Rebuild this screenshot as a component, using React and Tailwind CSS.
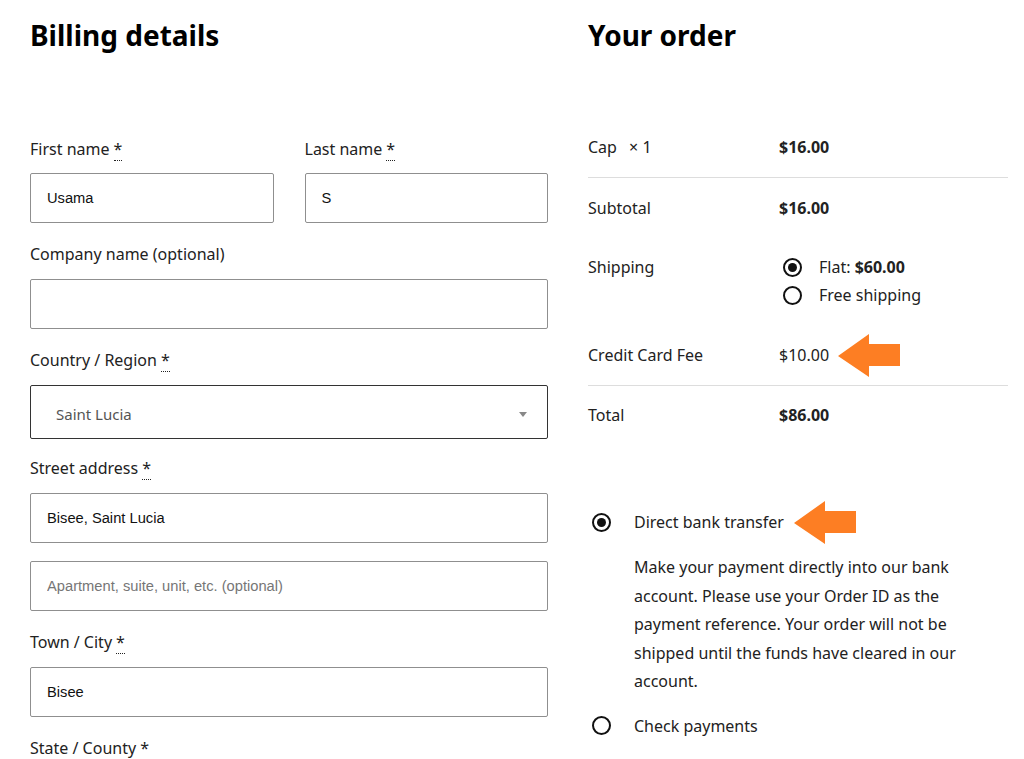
import React from 'react';

const font = { fontFamily: '"Noto Sans", "Open Sans", sans-serif' };
const inputFont = { fontFamily: '"Liberation Sans", Arial, sans-serif' };

const Req = () => (
  <abbr className="no-underline border-b border-dotted border-[#222] ml-1" title="required">*</abbr>
);

const Field = ({ label, value, placeholder, optional, gap = 'mb-[13px]' }) => (
  <div className="mb-[19px]">
    {label && (
      <label className={`block text-[16px] leading-6 text-[#222] ${gap}`}>
        {label}
        {!optional && <Req />}
      </label>
    )}
    <input
      readOnly
      value={value || ''}
      placeholder={placeholder}
      className="w-full h-[50px] border border-[#8f8f8f] rounded-[2px] px-[16px] text-[14.7px] text-[#111] placeholder:text-[#767676] outline-none"
      style={inputFont}
    />
  </div>
);

const Radio = ({ checked }) => (
  <span className="inline-flex items-center justify-center w-[19px] h-[19px] rounded-full border-2 border-[#111] shrink-0">
    {checked && <span className="w-[9px] h-[9px] rounded-full bg-[#111]" />}
  </span>
);

const Arrow = ({ className }) => (
  <svg className={className} width="63" height="43" viewBox="0 0 63 43">
    <polygon points="0,22 31,0 31,10 62,10 62,32 31,32 31,43" fill="#fd7e23" />
  </svg>
);

export default function App() {
  return (
    <div className="min-h-screen bg-white flex gap-10 pl-[30px] pr-4 pt-[16px] text-[#222]" style={font}>
      {/* Billing */}
      <div className="w-[518px] shrink-0">
        <h2 className="text-[28px] font-bold leading-[38px] text-black mb-[83px]">Billing details</h2>
        <div className="grid grid-cols-2 gap-x-[31px]">
          <Field label="First name" value="Usama" gap="mb-3" />
          <Field label="Last name" value="S" gap="mb-3" />
        </div>
        <Field label="Company name (optional)" optional />
        <div className="mb-[17px]">
          <label className="block text-[16px] leading-6 mb-[13px]">Country / Region<Req /></label>
          <div className="h-[54px] border border-[#333] rounded-[2px] flex items-center justify-between pl-[25px] pr-5 pt-1 text-[15px] text-[#555]">
            <span>Saint Lucia</span>
            <span className="w-0 h-0 border-l-[4px] border-r-[4px] border-t-[5px] border-l-transparent border-r-transparent border-t-[#888]" />
          </div>
        </div>
        <div className="mb-[18px]">
          <label className="block text-[16px] leading-6 mb-[13px]">Street address<Req /></label>
          <input
            readOnly
            value="Bisee, Saint Lucia"
            className="w-full h-[50px] border border-[#8f8f8f] rounded-[2px] px-[16px] text-[14.7px] text-[#111] outline-none"
            style={inputFont}
          />
        </div>
        <Field placeholder="Apartment, suite, unit, etc. (optional)" optional />
        <Field label="Town / City" value="Bisee" />
        <label className="block text-[16px] leading-6">State / County<Req /></label>
      </div>

      {/* Order */}
      <div className="w-[420px] shrink-0">
        <h2 className="text-[28px] font-bold leading-[38px] text-black mb-[63px]">Your order</h2>
        <div className="text-[16px] leading-6">
          <div className="flex py-[18px] border-b border-[#ddd]">
            <div className="w-[191px]">Cap <span className="ml-2">× 1</span></div>
            <div className="font-bold">$16.00</div>
          </div>
          <div className="flex py-[18px]">
            <div className="w-[191px]">Subtotal</div>
            <div className="font-bold">$16.00</div>
          </div>
          <div className="flex pt-[15px] pb-[16px]">
            <div className="w-[191px] pt-[2px]">Shipping</div>
            <div className="flex flex-col">
              <div className="flex items-center h-7 pl-[4px]">
                <Radio checked />
                <span className="ml-[17px]">Flat: <b>$60.00</b></span>
              </div>
              <div className="flex items-center h-7 pl-[4px]">
                <Radio />
                <span className="ml-[17px]">Free shipping</span>
              </div>
            </div>
          </div>
          <div className="flex items-center py-[18px] border-b border-[#ddd]">
            <div className="w-[191px]">Credit Card Fee</div>
            <div className="flex items-center">
              <span>$10.00</span>
              <Arrow className="ml-[9px] -my-4" />
            </div>
          </div>
          <div className="flex pt-[17px] pb-[18px]">
            <div className="w-[191px]">Total</div>
            <div className="font-bold">$86.00</div>
          </div>
        </div>

        <div className="mt-[63px] text-[16px]">
          <div className="flex items-center h-7">
            <span className="w-[46px] pl-[4px] flex"><Radio checked /></span>
            <span>Direct bank transfer</span>
            <Arrow className="ml-[10px] -my-4" />
          </div>
          <p className="pl-[46px] mt-[17px] leading-[28.5px] pr-4">
            Make your payment directly into our bank account. Please use your Order ID as the payment reference. Your order will not be shipped until the funds have cleared in our account.
          </p>
          <div className="flex items-center h-7 mt-[16px]">
            <span className="w-[46px] pl-[4px] flex"><Radio /></span>
            <span>Check payments</span>
          </div>
        </div>
      </div>
    </div>
  );
}
